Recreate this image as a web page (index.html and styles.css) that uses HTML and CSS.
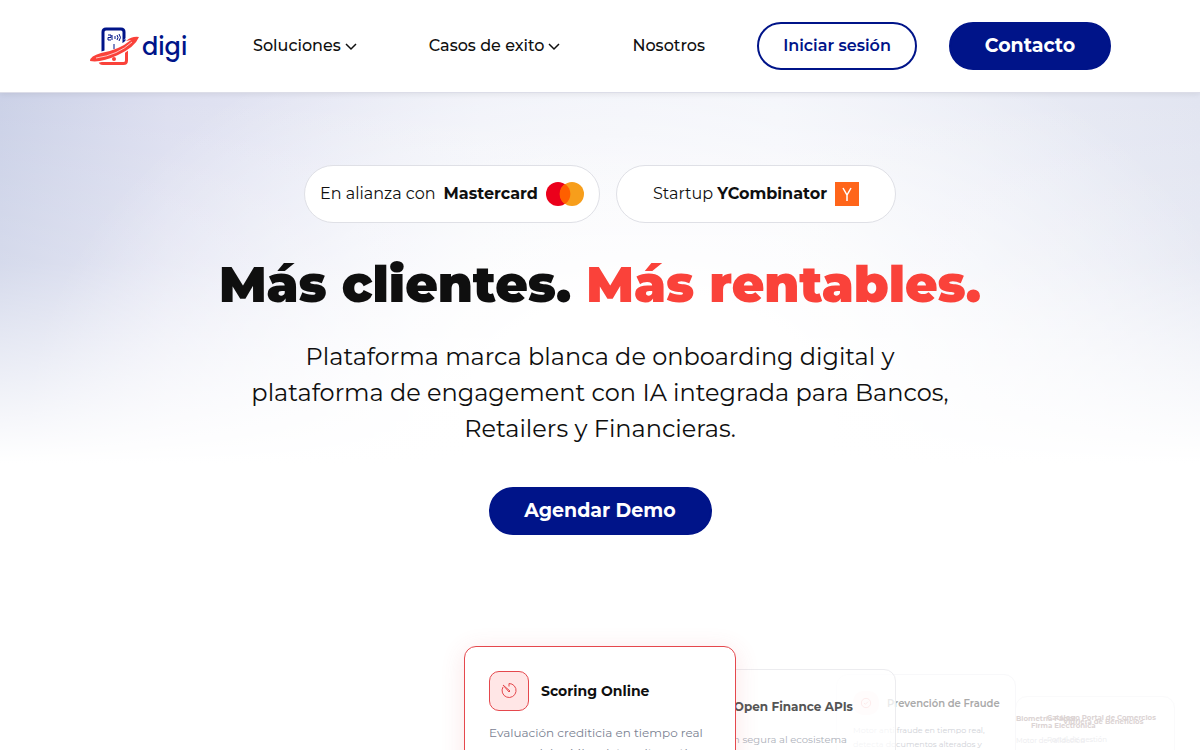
FILE: index.html
```
<!DOCTYPE html>
<html lang="es">
<head>
    <meta charset="UTF-8">
    <meta name="viewport" content="width=device-width, initial-scale=1.0">
    <title>digi</title>
    <link rel="stylesheet" href="styles.css">
</head>
<body>
    <header class="header">
        <a href="#" class="logo" aria-label="digi">
            <svg class="logo-mark" viewBox="0 0 50 40" fill="none">
                <path d="M14 28V6Q14 3 17 3H32Q35 3 35 6V17" stroke="#001489" stroke-width="3"/>
                <path d="M11 30V34.500Q11 37.500 14 37.500H34.500Q37.500 37.500 37.500 34.500V24" stroke="#fa423a" stroke-width="3"/>
                <path d="M0 35Q2 27 14 25Q29 22 40 12L34 14Q42 9 50 10Q46 23 28 31Q13 38 0 37Z" fill="#fff"/>
                <path d="M1 35Q1 30 12 27Q30 24 42 14L37 15Q43 10 50 11Q46 21 29 29Q12 37 1 35Z" fill="#fa423a"/>
                <path d="M7 32Q29 29 43 16" stroke="#fff" stroke-width="0.700"/>
                <path d="M19 9H22V11.500H19V14H22M23 9V14M26 10V13M28 9Q30 11.500 28 14M30 8Q33 11.500 30 15M25 18V23" stroke="#001489"/>
                <circle cx="25" cy="33" r="2" fill="#fa423a"/>
            </svg>
            <span class="logo-name">digi</span>
        </a>
        <nav class="nav">
            <a href="#">Soluciones
                <svg class="chevron" viewBox="0 0 12 12"><path d="M1 4l5 5 5-5"/></svg>
            </a>
            <a href="#">Casos de exito
                <svg class="chevron" viewBox="0 0 12 12"><path d="M1 4l5 5 5-5"/></svg>
            </a>
            <a href="#">Nosotros</a>
        </nav>
        <div class="actions">
            <button class="btn btn-outline">Iniciar sesión</button>
            <button class="btn btn-contact">Contacto</button>
        </div>
    </header>

    <main class="hero">
        <div class="badges">
            <div class="badge badge-mastercard">
                <span>En alianza con</span>
                <strong>Mastercard</strong>
                <svg class="mastercard" viewBox="0 0 38 24">
                    <circle cx="12" cy="12" r="12" fill="#eb001b"/>
                    <circle cx="26" cy="12" r="12" fill="#f79e1b"/>
                    <path d="M19 2a12 12 0 0 1 0 20a12 12 0 0 1 0-20z" fill="#ff5f00"/>
                </svg>
            </div>
            <div class="badge badge-yc">
                <span>Startup <strong>YCombinator</strong></span>
                <svg class="yc" viewBox="0 0 24 24">
                    <rect width="24" height="24" fill="#ff651a"/>
                    <path d="M8 6l4 7 4-7M12 13v6" fill="none" stroke="#fff" stroke-width="1.500"/>
                </svg>
            </div>
        </div>

        <h1 class="title">Más clientes. <span>Más rentables.</span></h1>
        <p class="subtitle">Plataforma marca blanca de onboarding digital y<br> plataforma de engagement con IA integrada para Bancos,<br> Retailers y Financieras.</p>
        <button class="btn btn-demo">Agendar Demo</button>

        <div class="carousel">
            <div class="stack">
                <article class="card card-far far-a">
                    <h3>Biometría Facial</h3>
                    <p>Motor de validación</p>
                </article>
                <article class="card card-far far-b">
                    <h3>Firma Electrónica</h3>
                </article>
                <article class="card card-far far-c">
                    <h3>Catálogo Portal de Comercios</h3>
                    <p>Portal de gestión</p>
                </article>
                <article class="card card-far far-d">
                    <h3>Vidriera de Beneficios</h3>
                </article>
                <article class="card card-third">
                    <div class="card-head">
                        <span class="card-icon">
                            <svg viewBox="0 0 18 18"><circle cx="9" cy="9" r="7"/><path d="M6 9l2 2 4-4"/></svg>
                        </span>
                        <h3>Prevención de Fraude</h3>
                    </div>
                    <p>Motor anti fraude en tiempo real, detecta documentos alterados y</p>
                </article>
                <article class="card card-second">
                    <div class="card-head">
                        <h3>Open Finance APIs</h3>
                    </div>
                    <p>Conexión segura al ecosistema</p>
                </article>
                <article class="card card-active">
                    <div class="card-head">
                        <span class="card-icon">
                            <svg viewBox="0 0 18 18"><path d="M3 5a7 7 0 1 0 6-3.500v3"/><path d="M3 3l7 6-1 1z"/></svg>
                        </span>
                        <h3>Scoring Online</h3>
                    </div>
                    <p>Evaluación crediticia en tiempo real con modelos ML y datos alternativos.</p>
                </article>
            </div>
        </div>
    </main>
</body>
</html>
```
FILE: styles.css
```
:root {
    --blue: #001489;
    --red: #fa423a;
    --ink: #0f0f0f;
}

* {
    box-sizing: border-box;
}

body {
    margin: 0;
    height: 100vh;
    display: flex;
    flex-direction: column;
    font-family: Montserrat, Inter, sans-serif;
    color: var(--ink);
    background: #fff;
}

h1, h3, p {
    margin: 0;
}

.header {
    display: flex;
    align-items: center;
    height: 93px;
    padding: 0 89px;
    background: #fff;
    border-bottom: 1px solid #dcdde8;
    box-shadow: 0 1px 6px rgba(0, 0, 0, 0.08);
    position: relative;
}

.logo {
    display: flex;
    align-items: center;
    gap: 3px;
    width: 94px;
    color: var(--blue);
    text-decoration: none;
}

.logo-mark {
    width: 50px;
    height: 40px;
    flex: none;
}

.logo-name {
    font-family: Poppins, Montserrat, sans-serif;
    font-size: 24px;
    font-weight: 500;
}

.nav {
    flex: 1;
    display: flex;
    justify-content: space-between;
    padding: 0 52px 0 70px;
    font-size: 16px;
    font-weight: 500;
    line-height: 20px;
}

.nav a {
    display: flex;
    align-items: center;
    gap: 4px;
    color: var(--ink);
    text-decoration: none;
    white-space: nowrap;
}

.chevron {
    width: 12px;
    height: 12px;
    fill: none;
    stroke: currentColor;
    stroke-width: 1.5;
}

.actions {
    display: flex;
    gap: 32px;
}

.btn {
    height: 48px;
    padding-bottom: 3px;
    border: 2px solid var(--blue);
    border-radius: 24px;
    background: var(--blue);
    color: #fff;
    font-family: inherit;
    font-size: 19px;
    font-weight: 700;
    cursor: pointer;
}

.btn-outline {
    width: 160px;
    background: #fff;
    color: var(--blue);
    font-size: 16px;
    font-weight: 600;
}

.btn-contact {
    width: 162px;
}

.btn-demo {
    width: 223px;
    margin-top: 40px;
    flex: none;
}

.hero {
    flex: 1;
    min-height: 0;
    display: flex;
    flex-direction: column;
    align-items: center;
    padding-top: 72px;
    background:
        linear-gradient(to bottom, rgba(255, 255, 255, 0) 0, rgba(255, 255, 255, 0.2) 170px, #fff 370px),
        radial-gradient(ellipse 620px 440px at 54% 330px, #fff 30%, rgba(255, 255, 255, 0) 100%),
        linear-gradient(to right, #cbd1e7 0, #dddff0 14%, #eceef7 40%, #f0f2f9 65%, #e2e5f1 100%);
}

.badges {
    display: flex;
    gap: 16px;
}

.badge {
    display: flex;
    align-items: center;
    justify-content: center;
    gap: 8px;
    height: 58px;
    padding-bottom: 1px;
    border: 1px solid #dfe0e6;
    border-radius: 29px;
    background: #fff;
    font-size: 16px;
    font-weight: 400;
    white-space: nowrap;
}

.badge strong {
    font-weight: 700;
}

.badge-mastercard {
    width: 296px;
}

.badge-yc {
    width: 280px;
}

.mastercard {
    width: 38px;
    height: 24px;
}

.yc {
    width: 24px;
    height: 24px;
}

.title {
    margin-top: 31px;
    font-size: 50px;
    line-height: 62px;
    font-weight: 900;
    text-align: center;
}

.title span {
    color: var(--red);
}

.subtitle {
    margin-top: 23px;
    font-size: 24px;
    line-height: 36px;
    text-align: center;
}

.carousel {
    flex: 1;
    min-height: 0;
    width: 100%;
    margin-top: 87px;
    padding-top: 24px;
    display: flex;
    justify-content: center;
    overflow: hidden;
}

.stack {
    position: relative;
    width: 272px;
}

.card {
    height: 220px;
    padding: 24px;
    border: 1px solid #e3e3e8;
    border-radius: 12px;
    background: #fff;
}

.card-head {
    display: flex;
    align-items: center;
    gap: 12px;
    height: 40px;
    white-space: nowrap;
}

.card-icon {
    display: flex;
    align-items: center;
    justify-content: center;
    width: 40px;
    height: 40px;
    border: 1px solid #e5484d;
    border-radius: 10px;
    background: #ffe6e6;
}

.card-icon svg {
    width: 18px;
    height: 18px;
    fill: none;
    stroke: #e5484d;
    stroke-width: 1;
}

.card h3 {
    font-size: 14px;
    font-weight: 700;
}

.card p {
    margin-top: 12px;
    color: #7b8292;
    font-size: 12px;
    line-height: 20px;
}

.card-active {
    position: relative;
    border-color: #e5484d;
    box-shadow: 0 4px 24px rgba(229, 72, 77, 0.14);
}

/* cards waiting behind the active one */
.card-second,
.card-third,
.card-far {
    position: absolute;
}

.card-second {
    top: 23px;
    right: -160px;
    width: 240px;
    padding: 16px 42px 16px 0;
    text-align: right;
    border-color: #ececef;
    background: rgba(255, 255, 255, 0.75);
    color: #555;
}

.card-second .card-head {
    justify-content: flex-end;
}

.card.card-second h3 {
    font-size: 12px;
}

.card.card-second p {
    margin-top: 4px;
    margin-right: 6px;
    color: #adb1ba;
    font-size: 10px;
}

.card-third {
    top: 28px;
    right: -280px;
    width: 180px;
    padding: 16px 24px 16px 16px;
    border-color: #f8f8fa;
    color: #aaa;
}

.card-third .card-head {
    height: 24px;
    gap: 8px;
}

.card-third .card-icon {
    width: 26px;
    height: 24px;
    flex: none;
    border: 0;
    background: #fff3f3;
}

.card-third .card-icon svg {
    width: 12px;
    height: 12px;
    opacity: 0.6;
}

.card.card-third h3 {
    font-size: 10px;
    font-weight: 600;
}

.card.card-third p {
    margin-top: 8px;
    color: #d0d2d8;
    font-size: 8px;
    line-height: 14px;
}

.card-far {
    top: 50px;
    width: 160px;
    padding: 16px 0 0;
    border-color: #fafafb;
    background: none;
    color: #dcd4d4;
}

.card.card-far h3 {
    font-size: 7px;
    line-height: 12px;
}

.card.card-far p {
    font-size: 7px;
    line-height: 8px;
    color: #ebebee;
}

.card-far.far-a {
    left: 551px;
}

.card-far.far-b {
    left: 567px;
    padding-top: 24px;
    border: 0;
}

.card-far.far-c {
    left: 583px;
    border: 0;
}

.card-far.far-d {
    left: 599px;
    padding-top: 20px;
    border: 0;
}
```
